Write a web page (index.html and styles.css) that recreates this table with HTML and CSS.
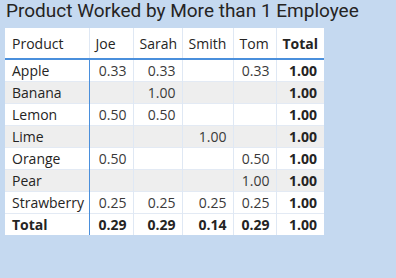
FILE: index.html
```html
<!DOCTYPE html>
<html>
<head>
<meta charset="utf-8">
<link rel="stylesheet" href="styles.css">
</head>
<body>
<div class="visual">
  <h1 class="title">Product Worked by More than 1 Employee</h1>
  <table class="matrix">
    <colgroup>
      <col class="c-prod"><col class="c-joe"><col class="c-sarah"><col class="c-smith"><col class="c-tom"><col class="c-tot">
    </colgroup>
    <thead>
      <tr><th class="rowhead">Product</th><th>Joe</th><th>Sarah</th><th>Smith</th><th>Tom</th><th class="tot">Total</th></tr>
    </thead>
    <tbody>
      <tr><td class="rowhead">Apple</td><td>0.33</td><td>0.33</td><td></td><td>0.33</td><td class="tot">1.00</td></tr>
      <tr class="alt"><td class="rowhead">Banana</td><td></td><td>1.00</td><td></td><td></td><td class="tot">1.00</td></tr>
      <tr><td class="rowhead">Lemon</td><td>0.50</td><td>0.50</td><td></td><td></td><td class="tot">1.00</td></tr>
      <tr class="alt"><td class="rowhead">Lime</td><td></td><td></td><td>1.00</td><td></td><td class="tot">1.00</td></tr>
      <tr><td class="rowhead">Orange</td><td>0.50</td><td></td><td></td><td>0.50</td><td class="tot">1.00</td></tr>
      <tr class="alt"><td class="rowhead">Pear</td><td></td><td></td><td></td><td>1.00</td><td class="tot">1.00</td></tr>
      <tr><td class="rowhead">Strawberry</td><td>0.25</td><td>0.25</td><td>0.25</td><td>0.25</td><td class="tot">1.00</td></tr>
      <tr class="total"><td class="rowhead">Total</td><td>0.29</td><td>0.29</td><td>0.14</td><td>0.29</td><td class="tot">1.00</td></tr>
    </tbody>
  </table>
</div>
</body>
</html>
```
FILE: styles.css
```css
html, body {
  margin: 0;
  padding: 0;
  background: #c5d9f0;
  height: 100%;
}
.visual {
  padding: 0 0 0 5px;
}
.title {
  margin: 0;
  height: 28px;
  padding-left: 1px;
  font-family: Roboto, "Liberation Sans", sans-serif;
  font-weight: 400;
  font-size: 19px;
  line-height: 22px;
  color: #252423;
  white-space: nowrap;
}
.matrix {
  border-collapse: collapse;
  background: #ffffff;
  font-family: "Open Sans", "Liberation Sans", sans-serif;
  font-size: 14px;
  color: #252423;
  table-layout: fixed;
  width: 319px;
}
.c-prod { width: 84px; }
.c-joe { width: 44px; }
.c-sarah { width: 49px; }
.c-smith { width: 51px; }
.c-tom { width: 43px; }
.c-tot { width: 48px; }
.matrix th, .matrix td {
  padding: 0 6px;
  white-space: nowrap;
  border-left: 1px solid #dfe8f4;
  text-align: right;
  overflow: visible;
}
.matrix th {
  font-weight: 400;
  height: 30px;
  text-align: left;
  border-bottom: 2px solid #4a8fdc;
}
.matrix td {
  height: 21px;
  line-height: 20px;
  border-top: 1px solid #e3eaf4;
  color: #3a3a3a;
}
.matrix th:first-child, .matrix td:first-child { border-left: none; }
.matrix .rowhead { text-align: left; padding-left: 7px; color: #252423; }
.matrix td.rowhead { border-right: 1px solid #4a8fdc; }
.matrix .tot { text-align: right; font-weight: 700; color: #252423; padding-right: 7px; }
.matrix tr.alt td { background: #eeeeee; }
.matrix tr.total td { font-weight: 700; color: #252423; }
```
